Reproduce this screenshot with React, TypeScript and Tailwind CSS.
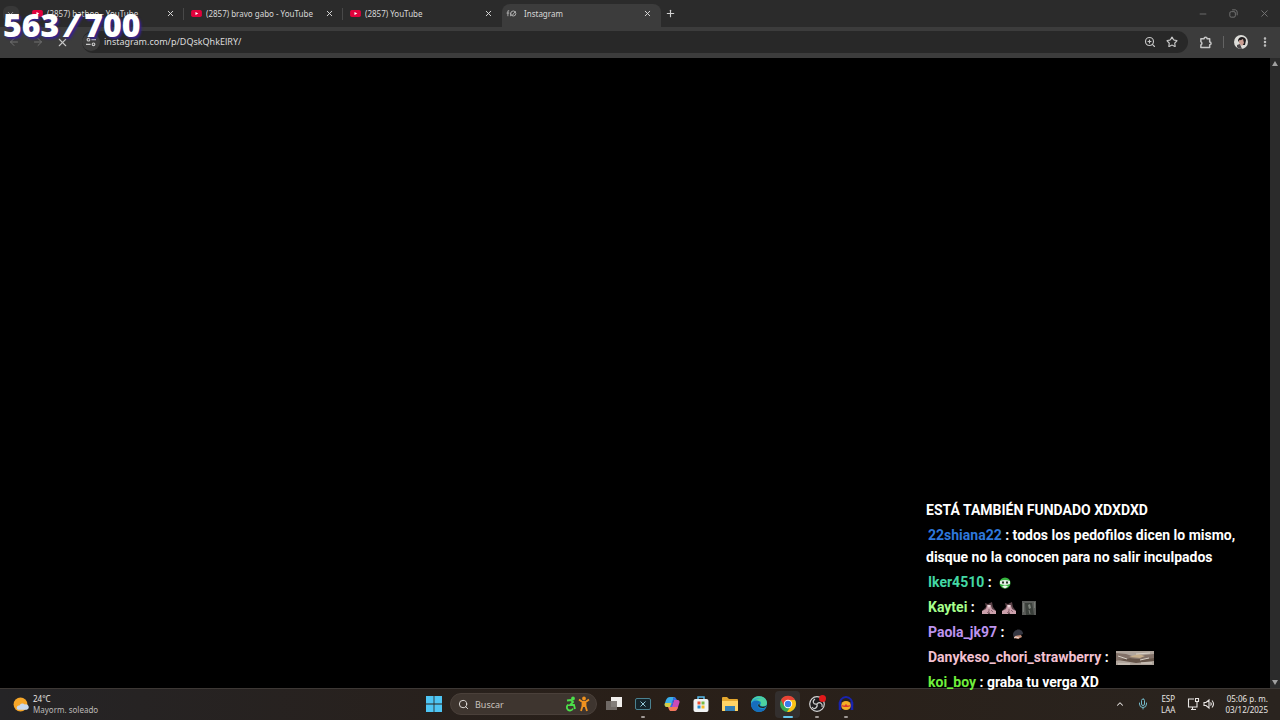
import type { ReactNode } from 'react';
import { ArrowLeft, ArrowRight, ChevronDown, ChevronUp, Mic, Minus, MoreVertical, Plus, Search, Star, X, ZoomIn } from 'lucide-react';

interface TabProps {
  title: string;
  active?: boolean;
  divider?: boolean;
}

function YouTubeIcon() {
  return (
    <svg viewBox="0 0 12 10" className="h-[9px] w-[11px] shrink-0">
      <rect y="1" width="12" height="8" rx="2" fill="#e0023c" />
      <path d="M4.8 3.2 8 5 4.8 6.8z" fill="#fff" />
    </svg>
  );
}

function LoadingIcon() {
  return (
    <svg viewBox="0 0 12 10" className="h-[9px] w-[11px] shrink-0" fill="none" stroke="#b5b5b5">
      <path d="M3.5 2H2v6M.5 4.5h3M5 4v4" />
      <circle cx="8" cy="5" r="2.8" />
      <path d="m6.500 7.500 4-5" />
    </svg>
  );
}

function Tab({ title, active, divider }: TabProps) {
  return (
    <div
      className={`relative flex w-[159px] shrink-0 items-center gap-1 pr-[9px] ${
        active ? 'mt-1 h-[23px] rounded-t-lg bg-[#3c3c3c] pb-1 pl-1' : 'h-[27px] pl-[7px]'
      }`}
    >
      {active ? <LoadingIcon /> : <YouTubeIcon />}
      <span className={`flex-1 truncate text-[8px] leading-3 text-[#d8d8d8] ${active ? 'pl-[3px]' : ''}`}>{title}</span>
      <button aria-label={`Cerrar ${title}`} className="text-[#dedede]">
        <X size={9} strokeWidth={2.5} />
      </button>
      {divider && <span className="absolute right-0 h-3 w-px bg-[#484848]" />}
    </div>
  );
}

function TabStrip() {
  return (
    <div className="flex h-[27px] items-start bg-[#2b2b2b]">
      <div className="flex h-[27px] w-[25px] shrink-0 items-center justify-center pr-1">
        <button aria-label="Buscar pestañas" className="flex size-4 items-center justify-center rounded-md bg-[#383838] text-[#bbb]">
          <ChevronDown size={9} />
        </button>
      </div>
      <Tab title="(2857) bathoo - YouTube" divider />
      <Tab title="(2857) bravo gabo - YouTube" divider />
      <Tab title="(2857) YouTube" />
      <Tab title="Instagram" active />
      <button aria-label="Nueva pestaña" className="ml-px flex h-[27px] w-4 items-center justify-center text-[#d0d0d0]">
        <Plus size={11} strokeWidth={2.5} />
      </button>
      <div className="ml-auto flex h-[27px] items-center gap-5 pr-2.5 text-[#777]">
        <button aria-label="Minimizar"><Minus size={10} /></button>
        <button aria-label="Restaurar">
          <svg viewBox="0 0 12 12" className="size-[11px]" fill="none" stroke="currentColor" strokeWidth="1">
            <rect x="2" y="4" width="6" height="6" rx="1.500" />
            <path d="M4.500 2h3.500a2.500 2.500 0 0 1 2 2.500V8" />
          </svg>
        </button>
        <button aria-label="Cerrar"><X size={11} /></button>
      </div>
    </div>
  );
}

function Toolbar() {
  return (
    <div className="flex h-[31px] items-center bg-[#3c3c3c] pb-px pl-2 text-[#c7c7c7]">
      <div className="flex w-[74px] shrink-0 items-center gap-3">
        <button aria-label="Atrás" className="text-[#707070]"><ArrowLeft size={12} /></button>
        <button aria-label="Adelante" className="text-[#707070]"><ArrowRight size={12} /></button>
        <button aria-label="Detener"><X size={13} /></button>
      </div>
      <div className="flex h-[22px] flex-1 items-center gap-1 rounded-full bg-[#282828] pr-2.5">
        <button aria-label="Información del sitio" className="flex size-[18px] items-center justify-center rounded-full bg-[#3c3c3c]">
          <svg viewBox="0 0 12 12" className="size-[10px]" fill="none" stroke="currentColor" strokeWidth="1.400">
            <circle cx="3" cy="3.200" r="1.600" />
            <path d="M6.500 3.200H12M0 8.800h5.500" />
            <circle cx="9" cy="8.800" r="1.600" />
          </svg>
        </button>
        <input
          aria-label="Dirección"
          defaultValue="instagram.com/p/DQskQhkElRY/"
          className="min-w-0 flex-1 bg-transparent text-[9px] leading-4 text-[#dcdcdc] outline-none"
        />
        <button aria-label="Zoom"><ZoomIn size={12} strokeWidth={2.3} /></button>
        <button aria-label="Favoritos" className="ml-1.5"><Star size={12} strokeWidth={2.3} /></button>
      </div>
      <div className="flex w-[92px] shrink-0 items-center justify-between pr-[9px] pl-[11px]">
        <button aria-label="Extensiones">
          <svg viewBox="0 0 14 14" className="size-[13px]" fill="none" stroke="currentColor" strokeWidth="1.600" strokeLinejoin="round">
            <path d="M2 3h3.500a1.600 1.600 0 0 1 3.200 0H11.500v3.500a1.500 1.500 0 0 1 0 3V12.500H2V9.700a2 2 0 0 0 0-3.600z" />
          </svg>
        </button>
        <span className="h-3 w-px bg-[#636363]" />
        <button aria-label="Perfil">
          <svg viewBox="0 0 14 14" className="size-[14px]">
            <circle cx="7" cy="7" r="7" fill="#dcdcd8" />
            <path d="M4 6c0-5 7-5 8-1l-1 5H9z" fill="#211e20" />
            <path d="M5 5c2 1 3-1 4-1l1 4-2 3-3-3z" fill="#c99d91" />
            <path d="m3 10 3-1 2 5c-3 0-4-1-5-2z" fill="#494548" />
          </svg>
        </button>
        <button aria-label="Menú"><MoreVertical size={12} strokeWidth={3} /></button>
      </div>
    </div>
  );
}

function Pepe() {
  return (
    <svg viewBox="0 0 12 12" className="size-3">
      <circle cx="6" cy="6" r="5.500" fill="#36b53e" />
      <path d="M1 4q5-2 10 0v3q-5 2-10 0z" fill="#e3efe3" />
      <path d="M3 4.500h2v2H3zM7 4.500h2v2H7z" fill="#253427" />
      <path d="M3 9.500q3-2 6 0l-3 2z" fill="#eef4ec" />
    </svg>
  );
}

function Hands() {
  return (
    <svg viewBox="0 0 14 14" className="size-3.5">
      <path d="m3 2 3 1 4-2 1 5 3 4v3H0v-3l4-4z" fill="#5b4248" />
      <path d="m5 5 2-1 2 1 1 3 4 2v3H8l-1-3-1 3H0v-3l4-2z" fill="#cba0ab" />
      <path d="M5 4h4L7 7z" fill="#eed9dd" />
      <path d="M7 8v2l-2 2M9 9l2 2" stroke="#8c6470" fill="none" />
    </svg>
  );
}

function GreyPhoto() {
  return (
    <svg viewBox="0 0 14 14" className="size-3.5">
      <path d="M0 0h14v14H0z" fill="#5a5c59" />
      <path d="M3 2h7l2 12H4z" fill="#3a3f3a" />
      <path d="m6 4 2-1 1 4-2 1z" fill="#7d837b" />
      <path d="M1.500 2v9M12.500 1v6M7 9l1 4" stroke="#777b75" />
    </svg>
  );
}

function CapFace() {
  return (
    <svg viewBox="0 0 12 12" className="size-3">
      <path d="M1 8c0-7 10-7 10-1l-5 2-4 2z" fill="#343641" />
      <path d="m3 9 6-1 1 2-4 2-4-1z" fill="#c6917c" />
      <path d="m2 11 2-1 3 1" stroke="#eed8cf" fill="none" />
    </svg>
  );
}

function WidePhoto() {
  return (
    <svg viewBox="0 0 38 14" className="h-3.5 w-[38px]">
      <path d="M0 0h38v14H0z" fill="#b0a59c" />
      <path d="m0 2 10 1 9 3 8-2 11-1v4l-12 1-14-1-12 3z" fill="#827168" />
      <path d="m2 9 12-2 10 1 14-1v3l-18 2z" fill="#655449" />
      <path d="m13 6 9-3 7 2-5 2z" fill="#c6ae8c" />
      <path d="m2 5 9 3M20 3l14-1M24 9l9-2M2 13h12M25 12h11" stroke="#d8d0c6" />
    </svg>
  );
}

interface MessageProps {
  user: string;
  color: string;
  children: ReactNode;
}

function Message({ user, color, children }: MessageProps) {
  return (
    <p className="mb-[3px]">
      <span className={`ml-0.5 ${color}`}>{user}</span> : {children}
    </p>
  );
}

function Chat() {
  return (
    <div className="absolute right-0 -bottom-2 z-10 w-[354px] pr-8 font-[Roboto,sans-serif] text-[14px] leading-[22px] font-bold text-white [&_svg]:mr-0.5 [&_svg]:ml-1 [&_svg]:inline-block">
      <p className="mb-[3px]">ESTÁ TAMBIÉN FUNDADO XDXDXD</p>
      <Message user="22shiana22" color="text-[#2e78dc]">todos los pedofilos dicen lo mismo, disque no la conocen para no salir inculpados</Message>
      <Message user="Iker4510" color="text-[#43d8a5]"><Pepe /></Message>
      <Message user="Kaytei" color="text-[#a6ff8c]"><Hands /><Hands /><GreyPhoto /></Message>
      <Message user="Paola_jk97" color="text-[#bd93ef]"><CapFace /></Message>
      <Message user="Danykeso_chori_strawberry" color="text-[#f3c1d1]"><WidePhoto /></Message>
      <Message user="koi_boy" color="text-[#70ef3c]">graba tu verga XD</Message>
    </div>
  );
}

function Page() {
  return (
    <main className="relative flex min-h-0 flex-1 justify-end bg-black">
      <Chat />
      <div className="flex w-[10px] flex-col items-center justify-between bg-[#2b2b2b] py-0.5">
        <svg viewBox="0 0 8 8" className="size-2"><path d="m4 1 3 5H1z" fill="#a0a0a0" /></svg>
        <svg viewBox="0 0 8 8" className="size-2"><path d="m4 7 3-5H1z" fill="#a0a0a0" /></svg>
      </div>
    </main>
  );
}

interface AppButtonProps {
  label: string;
  running?: boolean;
  active?: boolean;
  children: ReactNode;
}

function AppButton({ label, running, active, children }: AppButtonProps) {
  return (
    <button
      aria-label={label}
      className={`relative flex h-[27px] w-[25px] items-center justify-center rounded-sm ${active ? 'bg-[#332f2e]' : ''}`}
    >
      <svg viewBox="0 0 18 18" className="size-[18px]">{children}</svg>
      {active && <span className="absolute bottom-0 h-0.5 w-2.5 rounded-full bg-[#65c7ef]" />}
      {running && <span className="absolute bottom-0 h-0.5 w-1 rounded-full bg-[#a19a96]" />}
    </button>
  );
}

function Taskbar() {
  return (
    <footer className="grid h-8 grid-cols-[1fr_auto_1fr] items-center border-t border-[#3d3835] bg-linear-to-r from-[#252426] via-[#291f18] to-[#2a241f] pb-px text-[8px] leading-[11px] text-[#e8e5e3]">
      <button className="flex items-center gap-1 pl-3 text-left">
        <svg viewBox="0 0 16 16" className="size-[17px]">
          <circle cx="8" cy="8" r="6.500" fill="#f6a629" />
          <path d="M6 13a2 2 0 0 1 1-4 3 3 0 0 1 5-1 2.500 2.500 0 0 1 2 5z" fill="#c9d9ee" />
        </svg>
        <span>24°C<br /><span className="text-[#bcb9b7]">Mayorm. soleado</span></span>
      </button>
      <div className="flex items-center pl-1">
        <button aria-label="Inicio" className="mr-2">
          <svg viewBox="0 0 16 16" className="size-4" fill="#4ec5f4">
            <path d="M0 0h7.600v7.600H0zM8.400 0H16v7.600H8.400zM0 8.400h7.600V16H0zM8.400 8.400H16V16H8.400z" />
          </svg>
        </button>
        <label className="mr-1 flex h-[22px] w-[147px] items-center gap-1.5 rounded-full border border-[#4a403a] bg-[#3e352f] pr-1 pl-[7px]">
          <Search size={11} className="shrink-0" />
          <input aria-label="Buscar" placeholder="Buscar" className="min-w-0 flex-1 bg-transparent text-[9px] outline-none placeholder:text-[#c8c2be]" />
          <svg viewBox="0 0 28 16" className="h-4 w-7 shrink-0" fill="none" strokeWidth="1.800">
            <g stroke="#4ce04a">
              <circle cx="9" cy="2.500" r="1" />
              <path d="M3 4.500 7 4l2 2-3 3h4l1 4M4.500 8.500a3.200 3.200 0 1 0 4.500 4" />
            </g>
            <g stroke="#ef921f">
              <circle cx="20" cy="2.500" r="1" fill="#ef921f" />
              <path d="m15 3.500 3.500 2.500h3L25 3.500M18.500 6v4L17 15M21.500 6v4l1.500 5M20 6v5" />
            </g>
          </svg>
        </label>
        <div className="flex gap-1">
          <AppButton label="Vista de tareas">
            <path d="M6 2h11v10H6z" fill="#f0eeec" />
            <path d="M1 6h11v9H1z" fill="#77716e" fillOpacity=".9" />
          </AppButton>
          <AppButton label="Xbox" running>
            <rect x="1.500" y="3.500" width="15" height="11" rx="1.500" fill="#15242a" stroke="#4b8291" />
            <path d="m6.500 6.500 5 5m0-5-5 5" stroke="#95c9d8" />
          </AppButton>
          <AppButton label="Copilot">
            <path d="M7 2h4l-3 10H4c-2 0-3-2-2-4l1-3c1-2 2-3 4-3z" fill="#39aeea" />
            <path d="M2 8h7l-1 4H4c-2 0-3-2-2-4z" fill="#d5cc45" />
            <path d="M11 5h3c3 0 3 2 2 4l-1 3c-1 3-2 4-4 4H7z" fill="#ca4bb8" />
            <path d="M11 2c2 0 2 2 3 3h-3L9 12H7z" fill="#376de4" />
            <path d="M9 12h6c-1 3-2 4-4 4H8c-2 0-2-2-3-4z" fill="#f37958" />
          </AppButton>
          <AppButton label="Microsoft Store">
            <path d="M6 5V2h6v3" fill="none" stroke="#58b9e9" strokeWidth="1.500" />
            <rect x="1.500" y="4" width="15" height="13" rx="2" fill="#f1f3f4" />
            <path d="M5.500 6.500h3v3h-3z" fill="#ef5135" />
            <path d="M9.500 6.500h3v3h-3z" fill="#77b942" />
            <path d="M5.500 10.500h3v3h-3z" fill="#248cd3" />
            <path d="M9.500 10.500h3v3h-3z" fill="#f4b926" />
          </AppButton>
          <AppButton label="Explorador de archivos">
            <path d="M1 3q0-1 1-1h4l2 2h8q1 0 1 1v11H1z" fill="#e4a72e" />
            <path d="M1 6h16v9q0 1-1 1H2q-1 0-1-1z" fill="#ffd466" />
            <path d="M4 11h10v5H4z" fill="#347fb4" />
          </AppButton>
          <AppButton label="Edge">
            <circle cx="9" cy="9" r="8" fill="#1595cc" />
            <path d="M1 9C1-1 17-1 17 8c0 4-5 4-7 2 3-3-1-5-4-4-3 0-5 2-5 3z" fill="#4dd2a0" />
            <path d="M1 9c0-7 13-8 14-3-2-4-8-3-10 0-1 2-2 3-4 3z" fill="#2ba9d4" />
            <path d="M1 9c1-4 8-5 9-1-4 0-3 6 2 6 2 0 4-1 4-1-4 7-15 4-15-4z" fill="#176dbb" />
            <path d="M10 8c-2 3 2 5 6 3l1-1c-2 5-9 3-9 0z" fill="#2a211d" />
          </AppButton>
          <AppButton label="Chrome" active>
            <circle cx="9" cy="9" r="8" fill="#36a852" />
            <path d="M2 5a8 8 0 0 1 14 0H9L5 11z" fill="#e84335" />
            <path d="M9 5h7c3 5-1 12-8 12l4-6z" fill="#fbc116" />
            <circle cx="9" cy="9" r="4.200" fill="#fff" />
            <circle cx="9" cy="9" r="3.200" fill="#3b7eea" />
          </AppButton>
          <AppButton label="OBS Studio" running>
            <circle cx="9" cy="9" r="7.300" fill="#1e1d1e" stroke="#d5d5d5" strokeWidth="1.200" />
            <path d="M9 9c-4 1-5-3-2-5M9 9c3-3 6 0 5 3M9 9c1 4-3 6-5 3" fill="none" stroke="#ccc" strokeWidth="1.200" />
            <circle cx="14.500" cy="3.500" r="3.500" fill="#e2191a" />
          </AppButton>
          <AppButton label="Audacity" running>
            <path d="M3 11C1-1 17-1 15 11" fill="none" stroke="#1923ae" strokeWidth="2" />
            <ellipse cx="9" cy="10.500" rx="5" ry="4.500" fill="#f3ad26" />
            <path d="m4 11 2-1 1 1 2-2 2 2 1-1 2 1-3 1H7z" fill="#d9362f" />
            <path d="M3 7v8M15 7v8" stroke="#1923ae" strokeWidth="2.500" />
          </AppButton>
        </div>
      </div>
      <div className="flex items-center justify-end pr-3">
        <button aria-label="Iconos ocultos" className="mr-3"><ChevronUp size={10} strokeWidth={2.5} /></button>
        <button aria-label="Micrófono" className="mr-3 text-[#73b8c8]"><Mic size={12} /></button>
        <button className="mr-3 text-center">ESP<br />LAA</button>
        <button aria-label="Red y volumen" className="mr-2.5">
          <svg viewBox="0 0 28 14" className="h-3.5 w-7" fill="none" stroke="currentColor" strokeWidth="1.100">
            <path d="M7 2H1.500v8H10V6M4 12.500h5M5.500 10v2M8.500 1.500h3v3h-3zM10 4.500V7" />
            <path d="M17 5.500h2L22 3v8l-3-2.500h-2zM23.500 5.500q1.500 1.500 0 3M25 3.500q3 3.500 0 7" />
          </svg>
        </button>
        <button className="text-right">05:06 p. m.<br />03/12/2025</button>
      </div>
    </footer>
  );
}

export default function App() {
  return (
    <div className="relative flex h-screen flex-col overflow-hidden bg-black font-['Noto_Sans',sans-serif]">
      <header>
        <TabStrip />
        <Toolbar />
      </header>
      <Page />
      <Taskbar />
      <p className="absolute top-[7px] left-[3px] flex gap-[5px] font-['Open_Sans',sans-serif] text-[32px] leading-9 font-extrabold text-white [text-shadow:2px_2px_2px_#35238a]">
        <span>563</span>
        <span className="italic">/</span>
        <span>700</span>
      </p>
    </div>
  );
}
